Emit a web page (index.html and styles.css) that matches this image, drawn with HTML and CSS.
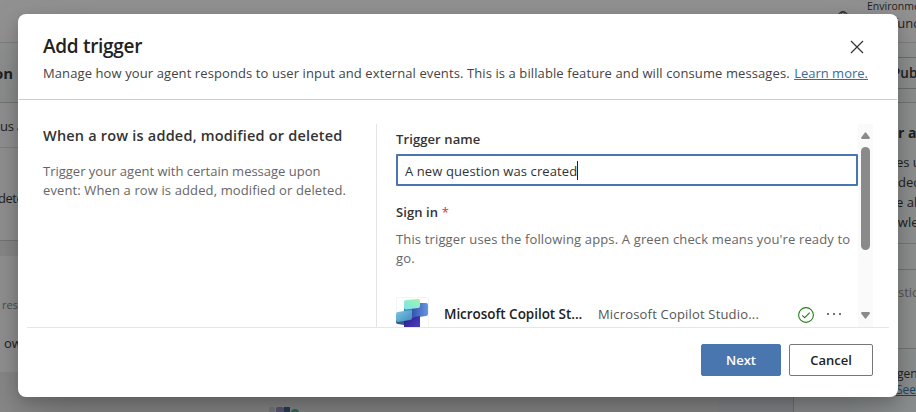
FILE: index.html
```html
<!DOCTYPE html>
<html lang="en">
<head>
<meta charset="utf-8">
<title>Add trigger</title>
<link rel="stylesheet" href="styles.css">
</head>
<body>
<div class="page">
  <div class="topbar">
    <svg class="globe" width="12" height="12" viewBox="0 0 12 12" fill="none" stroke="#222"><circle cx="6" cy="6" r="5.3"/><ellipse cx="6" cy="6" rx="2.5" ry="5.3"/><path d="M1 4h10"/></svg>
    <div class="env"><span class="env-label">Environme</span><span class="env-name">func</span></div>
  </div>
  <div class="agentbar"><b class="agent-name">on</b><div class="publish">Pub</div></div>
  <div class="columns">
    <div class="main">
      <div class="card details"><div class="status">us a</div><div class="desc">dete</div></div>
      <div class="card orchestration"><div class="small">res</div><div class="knowledge">ow</div></div>
      <svg class="peek" width="30" height="10" viewBox="0 0 30 10"><rect width="6" height="10" rx="2" fill="#7a7d7d"/><rect x="7" width="8" height="10" rx="2" fill="#5d5a78"/><rect x="15" width="6" height="10" fill="#263f5c"/><circle cx="26" cy="6" r="4" fill="#2d6f5b"/></svg>
    </div>
    <div class="gap"></div>
    <div class="side">
      <div class="tips"><b>r a</b><span class="out">es u</span><span>dec</span><span class="out">e al</span><span class="far">owle</span></div>
      <div class="ask">stic</div>
      <div class="note"><span>gen</span><a>See</a></div>
    </div>
  </div>
</div>
<div class="dialog">
  <header class="head">
    <div class="head-row">
      <h1>Add trigger</h1>
      <svg class="close" width="14" height="14" viewBox="0 0 14 14" fill="none" stroke="#333" stroke-width="1.15"><path d="M1 1l12 12M13 1L1 13"/></svg>
    </div>
    <p class="sub"><span>Manage how your agent responds to user input and external events. This is a billable feature and will consume messages.</span><a class="learn">Learn more.</a></p>
  </header>
  <div class="body">
    <section class="summary">
      <h2>When a row is added, modified or deleted</h2>
      <p><span>Trigger your agent with certain message upon</span><br><span class="event">event: When a row is added, modified or deleted.</span></p>
    </section>
    <section class="form">
      <div class="fields">
        <div class="label name-label">Trigger name</div>
        <div class="input"><span>A new question was created</span><i class="caret"></i></div>
        <div class="label sign-label">Sign in <em>*</em></div>
        <p class="hint"><span>This trigger uses the following apps. A green check means you're ready to</span><br>go.</p>
        <div class="connection">
          <svg class="logo" width="34" height="34" viewBox="0 0 34 34">
            <defs>
              <linearGradient id="a" x1="0" y1="1" x2="1" y2="0"><stop stop-color="#7be4ee"/><stop offset="1" stop-color="#a0f5a8"/></linearGradient>
              <linearGradient id="b" x1="0" y1="0" x2="1" y2="1"><stop stop-color="#7ac9e8"/><stop offset="1" stop-color="#4389b8"/></linearGradient>
              <linearGradient id="c" x1="0" y1="0" x2="1" y2="0"><stop stop-color="#3048aa"/><stop offset="1" stop-color="#6598df"/></linearGradient>
              <linearGradient id="d" x1="0" y1="0" x2="1" y2="1"><stop stop-color="#271985"/><stop offset="1" stop-color="#5145cc"/></linearGradient>
            </defs>
            <rect x=".5" y=".5" width="32" height="33" rx="2" fill="#fff" stroke="#f3f3f3"/>
            <path d="M14 12l10-6 6 0q2 0 2 2v9q0 2-2 2l-7 1-9 1z" fill="url(#c)"/>
            <path d="M8 9v7l8-2v-4z" fill="#3a86bd"/>
            <path d="M0 21v4q0 2 2 2l6 1v-6z" fill="#315b8e"/>
            <path d="M8 22l16-3v15H8z" fill="url(#d)"/>
            <path d="M0 17q0-2 2-2l6-1 8-1v8q0 2-2 2L2 25q-2 0-2-2z" fill="url(#b)"/>
            <path d="M8 5q0-2 2-2l12-1q2 0 2 2v5q0 2-2 2L10 12.500q-2 0-2-2z" fill="url(#a)"/>
          </svg>
          <b class="conn-name">Microsoft Copilot St...</b>
          <span class="conn-account">Microsoft Copilot Studio...</span>
          <svg class="check" width="16" height="16" viewBox="0 0 16 16" fill="none" stroke="#28801b" stroke-width="1.1"><circle cx="8" cy="8" r="7.4"/><path d="M4.2 8.300l2.500 2.400 5-5"/></svg>
          <svg class="more" width="16" height="4" viewBox="0 0 16 4" fill="#444"><circle cx="2" cy="2" r="1"/><circle cx="8" cy="2" r="1"/><circle cx="14" cy="2" r="1"/></svg>
        </div>
      </div>
      <div class="scrollbar">
        <svg width="9" height="7" viewBox="0 0 9 7" fill="#8a8a8a"><path d="M3.8.7Q4.5-.2 5.2.7L8.8 5.600Q9 7 8 7H1Q0 7 .2 5.600z"/></svg>
        <div class="thumb"></div>
        <svg class="down" width="9" height="7" viewBox="0 0 9 7" fill="#8a8a8a"><path d="M3.8 6.300Q4.5 7.200 5.200 6.300L8.800 1.400Q9 0 8 0H1Q0 0 .2 1.400z"/></svg>
      </div>
    </section>
  </div>
  <footer class="foot"><button class="btn primary">Next</button><button class="btn">Cancel</button></footer>
</div>
</body>
</html>
```
FILE: styles.css
```css
* { box-sizing: border-box; }
body { margin: 0; width: 916px; height: 412px; overflow: hidden; position: relative; font: 14px/20px "Open Sans", "Noto Sans", sans-serif; color: #333; }
h1, h2, p { margin: 0; }
span, b, a { white-space: nowrap; }

.page { width: 916px; height: 412px; overflow: hidden; background: #929292; color: #222; display: flex; flex-direction: column; font-size: 13px; }
.topbar { height: 43px; flex: none; border-bottom: 1px solid #7f7f7f; display: flex; }
.globe { margin: 11px 0 0 837px; flex: none; }
.env { margin-left: 18px; display: flex; flex-direction: column; }
.env-label { font-size: 10.5px; line-height: 13px; }
.env-name { margin-left: 26px; line-height: 20px; font-size: 13px; }
.agentbar { height: 60px; flex: none; background: #909292; border-bottom: 1px solid #777; display: flex; align-items: center; }
.agent-name { width: 886px; flex: none; font-size: 15px; margin-left: -6px; }
.publish { height: 32px; width: 80px; flex: none; padding-left: 11px; border: 1px solid #707070; border-right: 0; font-weight: 600; font-size: 13.5px; line-height: 30px; margin-top: 1px; }
.columns { flex: 1; display: flex; min-height: 0; }
.main { width: 719px; flex: none; background: #8b8b8b; display: flex; flex-direction: column; }
.card { background: #949494; width: 707px; flex: none; }
.details { height: 138px; border-bottom: 1px solid #777; }
.status { height: 45px; line-height: 46px; border-bottom: 1px solid #848484; letter-spacing: -.3px; }
.desc { margin-top: 40px; margin-left: -2px; letter-spacing: -.5px; }
.orchestration { margin-top: 15px; height: 116px; }
.small { padding: 39px 0 0 2px; font-size: 11px; color: #4e4e4e; }
.knowledge { padding: 18px 0 0 4px; }
.peek { margin: 35px 0 0 269px; flex: none; }
.gap { width: 75px; flex: none; background: #88898e; border-right: 1px solid #777; }
.side { width: 122px; flex: none; background: #929494; display: flex; flex-direction: column; }
.tips { height: 141px; flex: none; padding: 20px 0 0 104px; display: flex; flex-direction: column; border-bottom: 1px solid #7b7b7b; }
.tips b { font-size: 14px; margin-bottom: 9px; line-height: 20px; }
.out { margin-left: -2px; }
.far { margin-left: -8px; }
.ask { margin-top: 25px; height: 80px; flex: none; border: solid #777; border-width: 1px 0; padding: 12px 0 0 104px; color: #555; }
.note { flex: 1; padding: 17px 0 0 103px; background: #8f9292; font-size: 12px; line-height: 16px; display: flex; flex-direction: column; }
.note a { color: #1f4766; text-decoration: underline; margin-left: -1px; }

.dialog { position: absolute; left: 18px; top: 14px; width: 880px; height: 383px; border-radius: 8px; background: #fff; box-shadow: 0 25px 58px rgba(0,0,0,.22), 0 5px 14px rgba(0,0,0,.18); display: flex; flex-direction: column; }
.head { height: 86px; margin: 0 1px; border-bottom: 1px solid #ccc; padding: 20px 29px 0 24px; }
.head-row { height: 26px; display: flex; justify-content: space-between; }
h1 { font-size: 19px; line-height: 25px; font-weight: 600; color: #222; letter-spacing: -.3px; }
.close { margin: 6px 4px 0 0; }
.sub { margin-top: 3px; font-size: 13px; line-height: 20px; display: flex; color: #444; letter-spacing: .1px; }
.learn { margin-left: auto; color: #386d99; text-decoration: underline; letter-spacing: 0; }
.body { height: 227px; display: flex; }
.summary { width: 340px; flex: none; padding: 26px 0 0 25px; }
h2 { font-size: 14.5px; line-height: 20px; font-weight: 600; white-space: nowrap; letter-spacing: .2px; }
.summary p { margin-top: 16px; line-height: 19px; color: #666; font-size: 13px; }
.event { letter-spacing: .12px; }
.form { margin: 24px 0 0 18px; height: 203px; width: 497px; flex: none; overflow: hidden; display: flex; }
.fields { width: 482px; flex: none; height: 203px; border-left: 1px solid #e4e4e4; padding-left: 19px; }
.label { font-weight: 600; font-size: 13px; letter-spacing: .1px; }
.name-label { margin-top: 5px; }
.input { margin-top: 5px; height: 32px; width: 462px; border: 2px solid #4a76af; display: flex; align-items: center; padding: 1px 0 0 7px; font-size: 13px; border-radius: 1px; letter-spacing: .1px; }
.caret { width: 1px; height: 19px; background: #222; margin-top: -1px; }
.sign-label { margin-top: 16px; }
.sign-label em { color: #d13438; font-style: normal; font-weight: 400; }
.hint { margin-top: 8px; line-height: 19px; color: #666; font-size: 13px; letter-spacing: .15px; }
.connection { margin-top: 29px; height: 34px; display: flex; align-items: center; }
.logo { margin-right: 14px; flex: none; }
.conn-name { width: 154px; flex: none; font-weight: 600; font-size: 13.5px; color: #222; letter-spacing: -.04px; }
.conn-account { width: 200px; flex: none; color: #555; font-size: 13px; letter-spacing: .18px; }
.check { flex: none; margin-top: 1px; }
.more { margin: -1px 0 0 12px; flex: none; }
.scrollbar { width: 15px; flex: none; background: #fafafa; display: flex; flex-direction: column; align-items: center; padding-top: 8px; }
.scrollbar svg { flex: none; }
.thumb { width: 9px; height: 103px; flex: none; background: #8a8a8a; border-radius: 5px; margin-top: 8px; }
.down { margin-top: 62px; }
.foot { border-top: 1px solid #e6e6e6; margin: 0 9px; padding: 16px 16px 0; display: flex; justify-content: flex-end; gap: 8px; }
.btn { width: 84px; height: 32px; border: 1px solid #777; border-radius: 2px; background: #fff; color: #222; font: 600 13px/20px "Open Sans", sans-serif; padding: 0; }
.primary { width: 80px; background: #4a76af; border-color: #4a76af; color: #fff; }
```
